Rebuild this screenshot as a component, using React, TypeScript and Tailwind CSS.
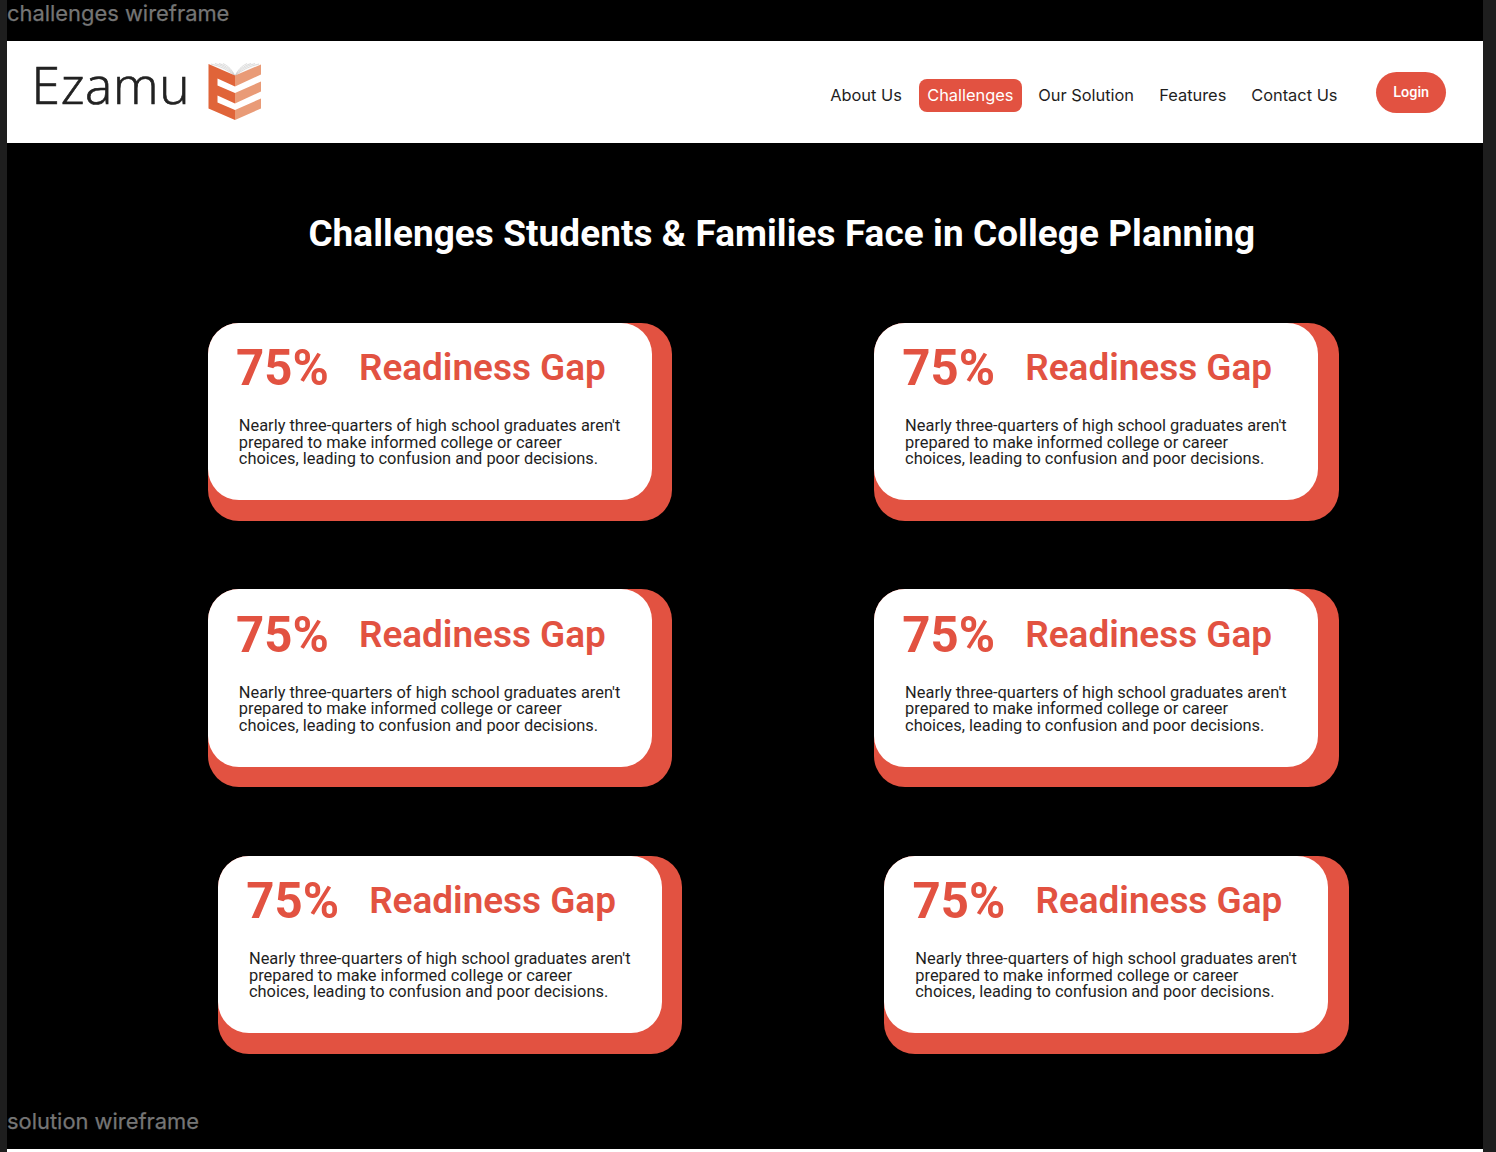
const navItems = [
  { label: 'About Us', style: 'w-[72px]' },
  { label: 'Challenges', style: 'w-[102.5px] ml-[17px] rounded-lg bg-[#e25241] text-white px-2' },
  { label: 'Our Solution', style: 'w-[96px] ml-[16.5px]' },
  { label: 'Features', style: 'w-[67px] ml-[25px]' },
  { label: 'Contact Us', style: 'w-[88px] ml-[25px]' },
];

function BookLogo() {
  return (
    <svg className="ml-[18px] mt-[21px] shrink-0" width="56" height="60" viewBox="0 0 56 60" aria-hidden="true">
      <path d="M3 2 L16 1 L29 13 L42 1 L55 2 L29 16Z" fill="#fafafa" />
      <g fill="none" stroke="#c8c8c8" strokeWidth="0.6">
        <path d="M5 2 Q19 5 29 14 Q39 5 53 2" />
        <path d="M9 1.5 Q22 5 29 14 Q36 5 49 1.5" />
        <path d="M13 1.5 Q24 5 29 14 Q34 5 45 1.5" />
        <path d="M17 1.5 Q25 5 29 14 Q33 5 41 1.5" />
      </g>
      <path d="M2.5 2 L29 13.5 V24.5 L11.5 16.5 V23.5 L29 31 V41.5 L11.5 33.5 V40.5 L29 48 V58 L2.5 46.5Z" fill="#e06439" />
      <path d="M29 13.5 L55 2.5 V12.5 L29 24.5Z M29 31 L55 19.5 V29.5 L29 41.5Z M29 48 L55 36.5 V46.5 L29 58Z" fill="#e99b77" />
    </svg>
  );
}

function StatCard() {
  return (
    <article className="h-[198px] w-[464.3px] rounded-[31px] bg-[#e25241]">
      <div className="h-[177.3px] w-[443.8px] rounded-[31px] bg-white pl-[28px] pt-[22px]">
        <div className="flex h-12 items-center whitespace-nowrap text-[#e25241]">
          <span className="w-[123px] text-[49.2px] font-bold leading-none">75%</span>
          <h2 className="text-[36.9px] font-semibold leading-none">Readiness Gap</h2>
        </div>
        <p className="ml-[2.8px] mt-[25.5px] whitespace-nowrap text-[16.4px] leading-[16.6px] text-[#1e1e1e]">
          Nearly three-quarters of high school graduates aren't
          <br />
          prepared to make informed college or career
          <br />
          choices, leading to confusion and poor decisions.
        </p>
      </div>
    </article>
  );
}

function CardRow({ inset = false }: { inset?: boolean }) {
  return (
    <div className={inset ? 'flex gap-[202px] pl-[211.2px]' : 'flex gap-[202px] pl-[201px]'}>
      <StatCard />
      <StatCard />
    </div>
  );
}

export default function App() {
  return (
    <div className="h-[1152px] w-[1496px] overflow-hidden bg-[#1e1e1e] pl-[7px] font-['Roboto',sans-serif]">
      <main className="flex h-full w-[1476.2px] flex-col bg-black">
        <div className="h-[41px] shrink-0 font-['Inter',sans-serif] text-[21.9px] leading-[27px] text-[#757575] [-webkit-text-stroke:0.25px_#757575]">challenges wireframe</div>
        <header className="flex h-[102.3px] shrink-0 bg-white pl-[24.5px]">
          <span className="w-[156.5px] pt-[7.5px] font-['Open_Sans',sans-serif] text-[51.5px] font-light leading-[70px] tracking-[0.7px] text-[#222] [-webkit-text-stroke:0.7px_#222]">Ezamu</span>
          <BookLogo />
          <nav className="ml-auto mt-[38px] flex h-[32.5px] whitespace-nowrap font-['Inter',sans-serif] text-[16.4px] font-normal leading-[33px] text-[#1e1e1e]">
            {navItems.map((item) => (
              <a key={item.label} className={item.style}>{item.label}</a>
            ))}
          </nav>
          <button className="ml-[37px] mr-[37px] mt-[30.5px] h-[41px] w-[70px] rounded-full bg-[#e25241] pt-[1.5px] text-[14.4px] font-medium text-white">Login</button>
        </header>
        <h1 className="mt-[69px] h-[44px] shrink-0 whitespace-nowrap pl-[301.4px] text-[36.9px] font-bold leading-[44px] tracking-[0.09px] text-white">
          Challenges Students &amp; Families Face in College Planning
        </h1>
        <section className="mt-[66.5px] flex shrink-0 flex-col gap-[68.5px]">
          <CardRow />
          <CardRow />
          <CardRow inset />
        </section>
        <div className="mt-auto h-[41px] shrink-0 font-['Inter',sans-serif] text-[21.9px] leading-[27px] text-[#757575] [-webkit-text-stroke:0.25px_#757575]">solution wireframe</div>
        <div className="h-[3px] shrink-0 bg-white" />
      </main>
    </div>
  );
}
